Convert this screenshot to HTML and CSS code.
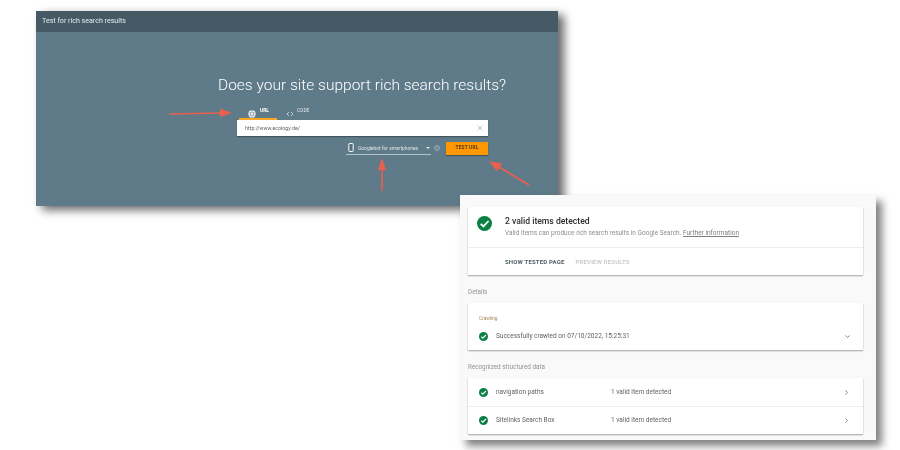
FILE: index.html
```html
<!DOCTYPE html>
<html lang="en">
<head>
<meta charset="utf-8">
<title>Test for rich search results</title>
<link rel="stylesheet" href="styles.css">
</head>
<body>
<div class="canvas">
  <section class="tester">
    <header class="tester-bar">Test for rich search results</header>
    <div class="tester-body">
      <h1 class="headline">Does your site support rich search results?</h1>
      <div class="form">
        <div class="tabs">
          <div class="tab tab-active">
            <svg class="tab-icon" viewBox="0 0 24 24"><circle cx="12" cy="12" r="11" fill="#fff"/><path d="M1 8.500h22M1 15.500h22M12 1c-6 6-6 16 0 22M12 1c6 6 6 16 0 22" fill="none" stroke="#607d8b" stroke-width="1.600"/></svg>
            <span class="tab-label">URL</span>
          </div>
          <div class="tab tab-code">
            <svg class="tab-icon" viewBox="0 0 24 24"><path d="M9 6l-6 6 6 6M15 6l6 6-6 6" fill="none" stroke="#dfe6e9" stroke-width="2.200"/></svg>
            <span class="tab-label">CODE</span>
          </div>
        </div>
        <div class="url-box">
          <span>http://www.ecology.de/</span>
          <svg class="clear" viewBox="0 0 10 10"><path d="M1 1l8 8M9 1l-8 8" stroke="#8d9499" stroke-width="1" fill="none"/></svg>
        </div>
        <div class="agent-row">
          <div class="agent">
            <svg class="phone" viewBox="0 0 6 10"><rect x=".6" y=".6" width="4.800" height="8.800" rx=".6" fill="#546e7a" stroke="#fff" stroke-width="1.100"/></svg>
            <span class="agent-name">Googlebot for smartphones</span>
            <span class="caret"></span>
          </div>
          <svg class="help" viewBox="0 0 10 10"><circle cx="5" cy="5" r="4" fill="none" stroke="#cfd8dc" stroke-width=".9"/><path d="M3.800 4c.2-1.500 2.600-1.300 2.400.2C6.100 5 5 5 5 6M5 7v.8" fill="none" stroke="#cfd8dc" stroke-width=".8"/></svg>
          <div class="test-btn">TEST URL</div>
        </div>
      </div>
    </div>
  </section>

  <section class="report">
    <div class="card summary">
      <div class="summary-top">
        <svg class="check check-lg" viewBox="0 0 24 24"><circle cx="12" cy="12" r="12" fill="#0b8043"/><path d="M6 12.500l4.200 4.200L18.500 8" fill="none" stroke="#fff" stroke-width="2.800"/></svg>
        <div>
          <h2 class="summary-title">2 valid items detected</h2>
          <p class="summary-sub">Valid items can produce rich search results in Google Search. <span class="link">Further information</span></p>
        </div>
      </div>
      <div class="summary-actions">
        <span class="action">SHOW TESTED PAGE</span>
        <span class="action action-off">PREVIEW RESULTS</span>
      </div>
    </div>

    <h3 class="section-label details-label">Details</h3>
    <div class="card crawl">
      <div class="crawl-label">Crawling</div>
      <div class="row crawl-row">
        <svg class="check" viewBox="0 0 24 24"><circle cx="12" cy="12" r="12" fill="#0b8043"/><path d="M6 12.500l4.200 4.200L18.500 8" fill="none" stroke="#fff" stroke-width="3"/></svg>
        <span class="row-name">Successfully crawled on 07/10/2022, 15:25:31</span>
        <svg class="chev" viewBox="0 0 10 10"><path d="M2 3.500l3 3 3-3" fill="none" stroke="#6f7a80" stroke-width="1.300"/></svg>
      </div>
    </div>

    <h3 class="section-label data-label">Recognized structured data</h3>
    <div class="card list">
      <div class="row list-row">
        <svg class="check" viewBox="0 0 24 24"><circle cx="12" cy="12" r="12" fill="#0b8043"/><path d="M6 12.500l4.200 4.200L18.500 8" fill="none" stroke="#fff" stroke-width="3"/></svg>
        <span class="row-name row-col">navigation paths</span>
        <span class="row-name">1 valid item detected</span>
        <svg class="chev" viewBox="0 0 10 10"><path d="M3.500 2l3 3-3 3" fill="none" stroke="#6f7a80" stroke-width="1.300"/></svg>
      </div>
      <div class="row list-row list-row-next">
        <svg class="check" viewBox="0 0 24 24"><circle cx="12" cy="12" r="12" fill="#0b8043"/><path d="M6 12.500l4.200 4.200L18.500 8" fill="none" stroke="#fff" stroke-width="3"/></svg>
        <span class="row-name row-col">Sitelinks Search Box</span>
        <span class="row-name">1 valid item detected</span>
        <svg class="chev" viewBox="0 0 10 10"><path d="M3.500 2l3 3-3 3" fill="none" stroke="#6f7a80" stroke-width="1.300"/></svg>
      </div>
    </div>
  </section>

  <svg class="arrows" viewBox="0 0 900 450">
    <g fill="none" stroke="#e8604f" stroke-width="1.700">
      <path d="M169 114L222 113"/>
      <path d="M382 191V167"/>
      <path d="M529 185L499 167"/>
    </g>
    <g fill="#e8604f">
      <path d="M220 108.500L232 113L220 117z"/>
      <path d="M382 158L386 170H378z"/>
      <path d="M489 161.500L502 163L497 171.500z"/>
    </g>
  </svg>
</div>
</body>
</html>
```
FILE: styles.css
```css
* { box-sizing: border-box; }
html, body { margin: 0; padding: 0; background: #fff; }
body { font-family: Roboto, "Liberation Sans", sans-serif; overflow: hidden; }

.canvas { position: relative; width: 900px; height: 450px; overflow: hidden; filter: blur(.45px); }

/* Left window */
.tester {
  position: absolute; left: 36px; top: 11px; width: 522px; height: 195px;
  background: #5f7a88;
  box-shadow: 6px 4px 9px rgba(0,0,0,.6);
  display: flex; flex-direction: column;
}
.tester-bar {
  height: 21px; padding: 0 6px; background: #455a64; color: #e6ebed;
  font-size: 7.100px; line-height: 20px; flex: none;
}
.tester-body { flex: 1; display: flex; flex-direction: column; padding-top: 43px; }
.headline {
  margin: 0 0 0 182px; color: #fff; font-weight: 300; font-size: 15.500px;
  line-height: 20px; white-space: nowrap;
}
.form { margin: 8px 0 0 201px; width: 251px; }
.tabs { display: flex; height: 17px; padding-left: 2px; }
.tab { display: flex; align-items: flex-start; height: 17px; color: #e4e9eb; font-size: 4.800px; }
.tab-active { width: 38px; padding-left: 9px; border-bottom: 2px solid #f9a825; color: #fff; font-weight: 700; }
.tab-code { margin-left: 9px; }
.tab-icon { width: 8px; height: 8px; margin-top: 7px; flex: none; }
.tab-label { margin: 5px 0 0 4px; line-height: 6px; }
.tab-code .tab-label { margin-left: 3px; }
.url-box {
  height: 16px; background: #fff; padding: 0 5px 0 8px;
  display: flex; align-items: center; justify-content: space-between;
  font-size: 5.300px; color: #5f6368;
  box-shadow: 0 1px 1px rgba(0,0,0,.3);
}
.clear { width: 6px; height: 6px; }
.agent-row { display: flex; align-items: flex-start; margin-top: 6px; padding-left: 109px; }
.agent {
  width: 85px; height: 12.500px; padding-left: 2px;
  display: flex; align-items: center; border-bottom: 1px solid #b4c2c9;
  color: #dfe5e8; font-size: 4.900px;
}
.phone { width: 6px; height: 9px; flex: none; }
.agent-name { margin-left: 4px; white-space: nowrap; }
.caret {
  width: 0; height: 0; margin-left: 8px; margin-top: 1px;
  border-left: 2.500px solid transparent; border-right: 2.500px solid transparent; border-top: 2.500px solid #e4e9eb;
}
.help { width: 6px; height: 6px; margin: 3px 0 0 3px; flex: none; }
.test-btn {
  width: 42px; height: 13px; margin-left: 6px; background: #ff9800; color: #4e3a12;
  font-size: 4.800px; font-weight: 700; line-height: 12px; text-align: center; letter-spacing: .2px;
  box-shadow: 0 1px 1px rgba(0,0,0,.3);
}

/* Right window */
.report {
  position: absolute; left: 460px; top: 195px; width: 416px; height: 245px;
  padding: 12px 13px 0 8px; background: #f9f9f9;
  box-shadow: 6px 6px 8px rgba(0,0,0,.5);
}
.card { background: #fff; box-shadow: 0 1px 1.500px rgba(0,0,0,.35); }
.summary { height: 68px; }
.summary-top { height: 41px; padding: 9px 0 0 9px; display: flex; border-bottom: 1px solid #ececec; }
.check { width: 9px; height: 9px; flex: none; }
.check-lg { width: 15px; height: 15px; margin: 0 13px 0 0; }
.summary-title { margin: 0; font-size: 8.600px; line-height: 10px; font-weight: 500; color: #2a2d30; }
.summary-sub { margin: 3px 0 0; font-size: 6.500px; line-height: 9px; color: #8a8f93; white-space: nowrap; }
.link { text-decoration: underline; color: #7c8084; }
.summary-actions { height: 27px; padding: 0 0 1px 37px; display: flex; align-items: center; font-size: 6px; font-weight: 700; letter-spacing: .17px; }
.action { color: #50616b; }
.action-off { margin-left: 11px; color: #c8cccf; }

.section-label { margin: 0; font-size: 6.300px; line-height: 8px; font-weight: 400; color: #8f9396; }
.details-label { padding-top: 13px; height: 28px; }
.data-label { padding-top: 13px; height: 28px; }

.crawl { height: 47px; padding: 12px 0 0 11px; }
.crawl-label { font-size: 4.800px; line-height: 7px; color: #a08a55; }
.crawl-row { margin: 10px 0 0 0; padding-right: 12px; height: 9px; }
.row { display: flex; align-items: center; }
.row-name { font-size: 6.500px; line-height: 9px; color: #5f6368; white-space: nowrap; }
.check + .row-name { margin-left: 8px; }
.row-col { width: 115px; }
.chev { width: 7px; height: 7px; margin-left: auto; flex: none; }

.list { height: 56px; }
.list-row { height: 28px; padding: 0 13px 0 11px; }
.list-row-next { border-top: 1px solid #ececec; }

/* Arrows over the composite */
.arrows { position: absolute; left: 0; top: 0; width: 900px; height: 450px; pointer-events: none; }
```
